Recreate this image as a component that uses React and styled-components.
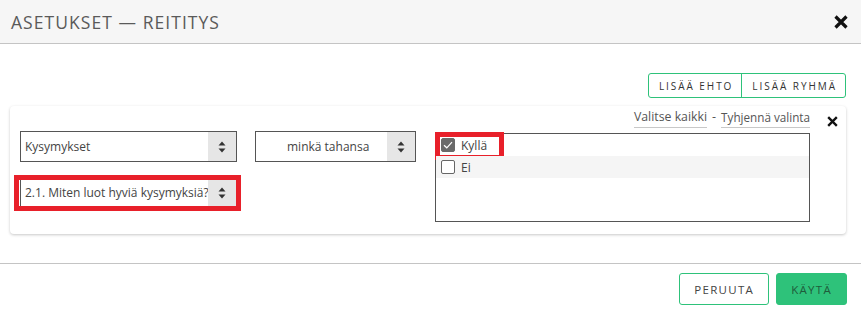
import React from "react";
import styled, { createGlobalStyle } from "styled-components";

const Global = createGlobalStyle`
  html, body {
    margin: 0;
    padding: 0;
    background: #ffffff;
    font-family: "Open Sans", "Liberation Sans", sans-serif;
    color: #444;
  }
  * { box-sizing: border-box; }
`;

export default function App() {
  return (
    <>
      <Global />
      <Modal>
        <Header>
          <Title>ASETUKSET — REITITYS</Title>
          <CloseIcon size={14} stroke={3.2} />
        </Header>
        <Body>
          <ButtonGroup>
            <OutlineButton>LISÄÄ EHTO</OutlineButton>
            <OutlineButton $joined>LISÄÄ RYHMÄ</OutlineButton>
          </ButtonGroup>
          <Card>
            <SelectColumn>
              <Select $width={217}>
                <SelectText>Kysymykset</SelectText>
                <Arrows />
              </Select>
              <Marked>
                <Select $width={217}>
                  <SelectText>2.1. Miten luot hyviä kysymyksiä?</SelectText>
                  <Arrows />
                </Select>
                <MarkFrame $inset="-2px -4px -3px -6px" />
              </Marked>
            </SelectColumn>
            <SelectColumn $gap={18}>
              <Select $width={161}>
                <SelectText $pad={31}>minkä tahansa</SelectText>
                <Arrows />
              </Select>
            </SelectColumn>
            <OptionsColumn>
              <Links>
                <LinkText>Valitse kaikki</LinkText>
                <Dash>-</Dash>
                <LinkText $tight>Tyhjennä valinta</LinkText>
              </Links>
              <ListBox>
                <Option>
                  <Check $checked>
                    <svg width="10" height="8" viewBox="0 0 10 8">
                      <path d="M1 4.2 L3.8 6.8 L9 1.2" fill="none" stroke="#fff" strokeWidth="1.2" />
                    </svg>
                  </Check>
                  <OptionLabel>Kyllä</OptionLabel>
                  <MarkFrame $inset="-2px auto -4px -1px" $w={69} />
                </Option>
                <Option $shaded>
                  <Check />
                  <OptionLabel>Ei</OptionLabel>
                </Option>
              </ListBox>
            </OptionsColumn>
            <CardClose>
              <CloseIcon size={11} stroke={3} />
            </CardClose>
          </Card>
        </Body>
        <Footer>
          <FooterButton>PERUUTA</FooterButton>
          <FooterButton $primary>KÄYTÄ</FooterButton>
        </Footer>
      </Modal>
    </>
  );
}

function CloseIcon({ size, stroke }) {
  return (
    <svg width={size} height={size} viewBox="0 0 14 14">
      <path d="M1.5 1.5 L12.5 12.5 M12.5 1.5 L1.5 12.5" stroke="#111" strokeWidth={stroke} strokeLinecap="butt" />
    </svg>
  );
}

function Arrows() {
  return (
    <ArrowBox>
      <svg width="8" height="12" viewBox="0 0 8 12">
        <path d="M4 0.5 L7.5 4.5 L0.5 4.5 Z" fill="#333" />
        <path d="M4 11.5 L7.5 7.5 L0.5 7.5 Z" fill="#333" />
      </svg>
    </ArrowBox>
  );
}

const Modal = styled.div`
  width: 861px;
  height: 314px;
  background: #fff;
  display: flex;
  flex-direction: column;
`;

const Header = styled.div`
  height: 44px;
  background: #f6f6f6;
  border-bottom: 1px solid #c4c4c4;
  display: flex;
  align-items: center;
  justify-content: space-between;
  padding: 0 13px 0 11px;
`;

const Title = styled.div`
  font-size: 17.5px;
  font-weight: 400;
  color: #5a5a5a;
  letter-spacing: 1.05px;
`;

const Body = styled.div`
  flex: 1;
  padding: 29px 15px 0 10px;
  display: flex;
  flex-direction: column;
  align-items: stretch;
`;

const ButtonGroup = styled.div`
  align-self: flex-end;
  display: flex;
  height: 25px;
  border: 1px solid #2ec27a;
  border-radius: 3px;
  margin-bottom: 8px;
`;

const OutlineButton = styled.div`
  display: flex;
  align-items: center;
  justify-content: center;
  padding: 0 8px 0 10px;
  font-size: 10px;
  letter-spacing: 1.95px;
  color: #333;
  border-left: ${(p) => (p.$joined ? "1px solid #2ec27a" : "none")};
`;

const Card = styled.div`
  display: flex;
  align-items: flex-start;
  background: #fff;
  border-radius: 4px;
  box-shadow: 0 1px 3px rgba(0, 0, 0, 0.22);
  padding: 0 0 12px 10px;
`;

const SelectColumn = styled.div`
  display: flex;
  flex-direction: column;
  gap: 15px;
  margin-top: 25px;
  margin-left: ${(p) => p.$gap || 0}px;
`;

const Select = styled.div`
  width: ${(p) => p.$width}px;
  height: 31px;
  border: 1px solid #555;
  display: flex;
  align-items: stretch;
  background: #fff;
`;

const SelectText = styled.div`
  flex: 1;
  display: flex;
  align-items: center;
  padding-left: ${(p) => p.$pad || 4}px;
  font-size: 12px;
  color: #444;
  white-space: nowrap;
  overflow: hidden;
`;

const ArrowBox = styled.div`
  width: 28px;
  background: #e6e6e6;
  display: flex;
  align-items: center;
  justify-content: center;
`;

const Marked = styled.div`
  position: relative;
`;

const MarkFrame = styled.div`
  position: absolute;
  inset: ${(p) => p.$inset};
  width: ${(p) => (p.$w ? `${p.$w}px` : "auto")};
  border: 5px solid #e8202a;
  pointer-events: none;
`;

const OptionsColumn = styled.div`
  margin-left: 19px;
  margin-top: 3px;
  width: 375px;
  display: flex;
  flex-direction: column;
  gap: 5px;
`;

const Links = styled.div`
  display: flex;
  justify-content: flex-end;
  align-items: flex-end;
  gap: 3px;
  height: 19px;
`;

const LinkText = styled.span`
  font-size: ${(p) => (p.$tight ? 11.7 : 12.3)}px;
  color: #555;
  line-height: 16px;
  padding-bottom: 2px;
  border-bottom: 1px solid #c8c8c8;
`;

const Dash = styled.span`
  font-size: 12.5px;
  color: #555;
  line-height: 16px;
  padding-bottom: 3px;
  margin: 0 2px;
`;

const ListBox = styled.div`
  height: 89px;
  border: 1px solid #555;
  display: flex;
  flex-direction: column;
`;

const Option = styled.div`
  position: relative;
  height: 22px;
  display: flex;
  align-items: center;
  gap: 6px;
  padding-left: 5px;
  background: ${(p) => (p.$shaded ? "#f5f5f5" : "#fff")};
`;

const Check = styled.div`
  width: 14px;
  height: 14px;
  border-radius: 2px;
  border: 1px solid ${(p) => (p.$checked ? "#6a6a6a" : "#666")};
  background: ${(p) => (p.$checked ? "#6a6a6a" : "#fff")};
  display: flex;
  align-items: center;
  justify-content: center;
`;

const OptionLabel = styled.span`
  font-size: 12px;
  color: #444;
`;

const CardClose = styled.div`
  margin-left: 17px;
  margin-top: 10px;
  display: flex;
`;

const Footer = styled.div`
  height: 51px;
  border-top: 1px solid #c4c4c4;
  display: flex;
  justify-content: flex-end;
  gap: 7px;
  padding: 9px 14px 0 0;
  margin-bottom: 0;
`;

const FooterButton = styled.div`
  height: 32px;
  padding: 0 14px;
  display: flex;
  align-items: center;
  justify-content: center;
  border-radius: 3px;
  font-size: 11.5px;
  letter-spacing: 1.3px;
  border: 1px solid #2ec27a;
  background: ${(p) => (p.$primary ? "#2ec27a" : "#fff")};
  color: ${(p) => (p.$primary ? "#1f5c3b" : "#444")};
`;
